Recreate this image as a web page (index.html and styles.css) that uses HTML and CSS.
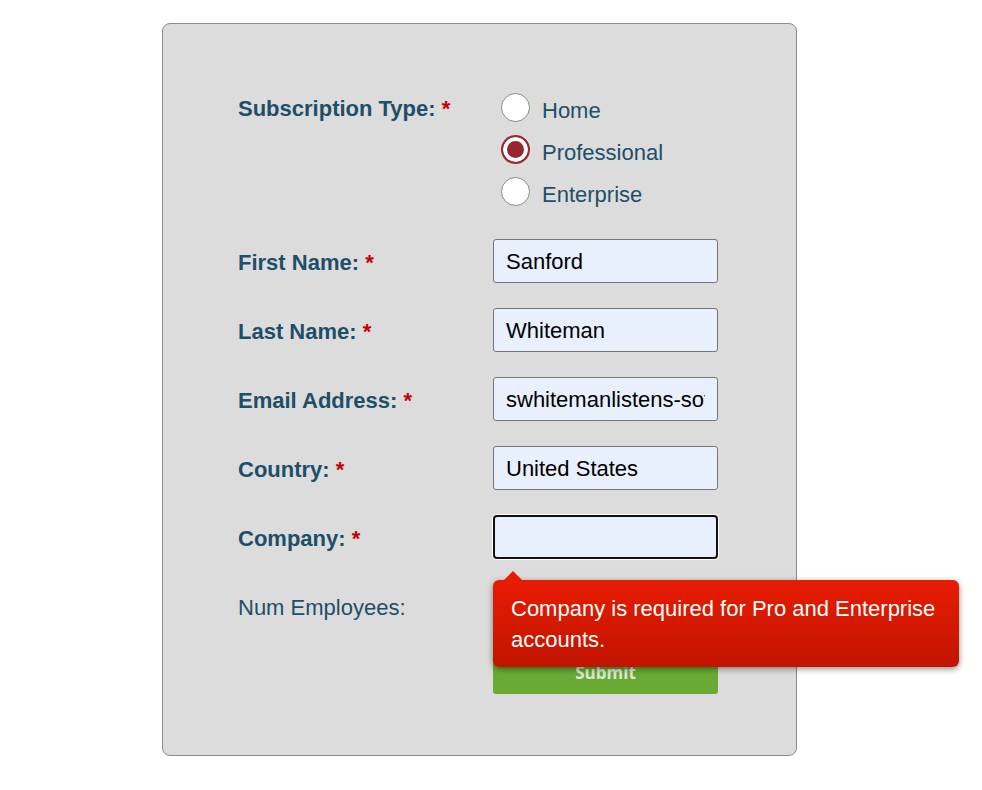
FILE: index.html
```html
<!DOCTYPE html>
<html lang="en">
<head>
    <meta charset="UTF-8">
    <meta name="viewport" content="width=device-width, initial-scale=1.0">
    <title>Sign Up</title>
    <link rel="stylesheet" href="styles.css">
</head>
<body>
    <div class="panel">
        <form class="signup">
            <div class="field field-top">
                <label class="field-label">Subscription Type: <span class="req">*</span></label>
                <div class="radio-group">
                    <label class="radio-option"><input type="radio" name="type" value="home"> <span>Home</span></label>
                    <label class="radio-option"><input type="radio" name="type" value="pro" checked> <span>Professional</span></label>
                    <label class="radio-option"><input type="radio" name="type" value="ent"> <span>Enterprise</span></label>
                </div>
            </div>

            <div class="field">
                <label class="field-label" for="first">First Name: <span class="req">*</span></label>
                <input class="text-input" id="first" type="text" value="Sanford">
            </div>

            <div class="field">
                <label class="field-label" for="last">Last Name: <span class="req">*</span></label>
                <input class="text-input" id="last" type="text" value="Whiteman">
            </div>

            <div class="field">
                <label class="field-label" for="email">Email Address: <span class="req">*</span></label>
                <input class="text-input" id="email" type="text" value="swhitemanlistens-software@example.com">
            </div>

            <div class="field">
                <label class="field-label" for="country">Country: <span class="req">*</span></label>
                <input class="text-input" id="country" type="text" value="United States">
            </div>

            <div class="field">
                <label class="field-label" for="company">Company: <span class="req">*</span></label>
                <div class="input-wrap">
                    <input class="text-input focused" id="company" type="text" value="">
                    <div class="error-tip">Company is required for Pro and Enterprise accounts.</div>
                </div>
            </div>

            <div class="field">
                <label class="field-label optional" for="employees">Num Employees:</label>
                <input class="text-input" id="employees" type="text" value="">
            </div>

            <div class="field field-submit">
                <span></span>
                <button class="submit-btn" type="button">Submit</button>
            </div>
        </form>
    </div>
</body>
</html>
```

FILE: styles.css
```css
body {
    margin: 0;
    background: #fff;
    font-family: "Liberation Sans", Arial, sans-serif;
}

.panel {
    width: 635px;
    box-sizing: border-box;
    margin: 23px 0 0 162px;
    padding: 62px 0 61px 75px;
    background: #dcdcdc;
    border: 1px solid #8c8c8c;
    border-radius: 8px;
}

.field {
    display: grid;
    grid-template-columns: 255px 225px;
    align-items: center;
    margin-bottom: 25px;
}

.field-top {
    align-items: start;
    margin-bottom: 27px;
}

.field-submit {
    margin-top: -3px;
    margin-bottom: 0;
}

.field-label {
    padding-top: 4px;
    font-size: 22px;
    font-weight: bold;
    color: #1e4f68;
    line-height: 40px;
}

.field-top .field-label {
    padding-top: 2px;
    line-height: 42px;
}

.field-label.optional {
    font-weight: normal;
}

.req {
    color: #c40000;
}

.radio-group {
    display: flex;
    flex-direction: column;
    padding-left: 8px;
}

.radio-option {
    display: flex;
    align-items: center;
    gap: 12px;
    height: 42px;
    font-size: 22px;
    color: #1e4f68;
}

.radio-option span {
    padding-top: 7px;
}

.radio-option input {
    appearance: none;
    -webkit-appearance: none;
    margin: 0;
    width: 29px;
    height: 29px;
    border: 1.5px solid #8a8a8a;
    border-radius: 50%;
    background: #fff;
}

.radio-option input:checked {
    border: 2px solid #9a2a31;
    background: #96262e;
    box-shadow: inset 0 0 0 4px #fff;
}

.input-wrap {
    position: relative;
}

.text-input {
    display: block;
    width: 225px;
    height: 44px;
    box-sizing: border-box;
    padding: 2px 12px 0;
    margin: 0;
    font-family: "Liberation Sans", Arial, sans-serif;
    font-size: 22px;
    color: #000;
    background: #e8f0fe;
    border: 1px solid #767676;
    border-radius: 3px;
    outline: none;
}

.text-input.focused {
    border: 2.5px solid #111;
    border-radius: 4px;
    box-shadow: 0 0 0 1px #fff;
}

.error-tip {
    position: absolute;
    top: 65px;
    left: 0;
    width: 466px;
    box-sizing: border-box;
    padding: 13px 18px 12px;
    font-size: 22px;
    line-height: 31px;
    color: #fff;
    background: linear-gradient(#e81c00, #c11400);
    border-radius: 6px;
    box-shadow: 0 2px 6px rgba(0, 0, 0, 0.45);
    z-index: 2;
}

.error-tip::before {
    content: "";
    position: absolute;
    top: -9px;
    left: 11px;
    border-left: 9px solid transparent;
    border-right: 9px solid transparent;
    border-bottom: 9px solid #e81c00;
}

.submit-btn {
    width: 225px;
    height: 44px;
    border: none;
    border-radius: 3px;
    background: #69aa35;
    color: #dde9d3;
    font-family: "Open Sans", sans-serif;
    font-size: 17px;
    font-weight: bold;
}
```
